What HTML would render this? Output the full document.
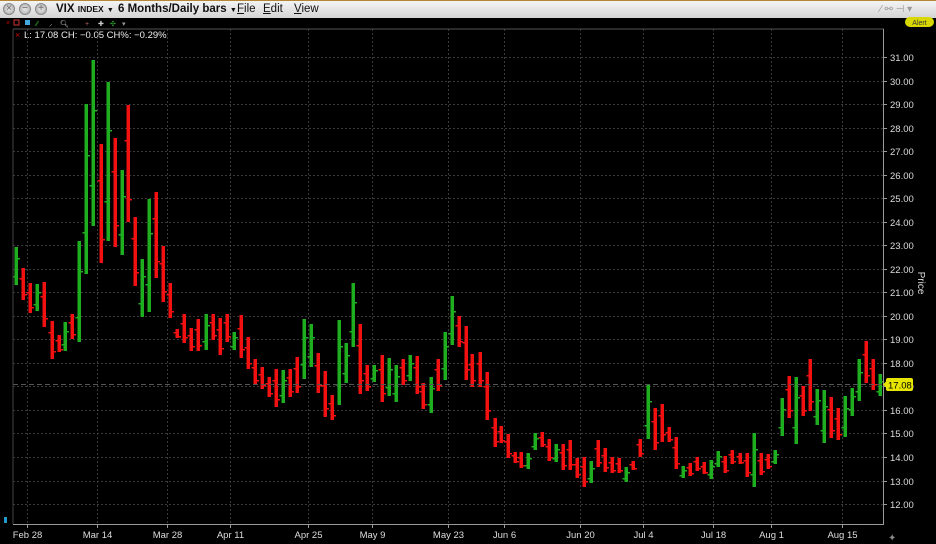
<!DOCTYPE html>
<html><head><meta charset="utf-8">
<style>
html,body{margin:0;padding:0;background:#000;width:936px;height:544px;overflow:hidden;font-family:"Liberation Sans","DejaVu Sans",sans-serif}
#top{position:absolute;left:0;top:0;width:936px;height:18px;background:linear-gradient(#f4f4f4,#d4d4d4);border-top:1px solid #b7853a;box-sizing:border-box}
.c{position:absolute;top:2px;width:12px;height:12px;border-radius:50%;background:radial-gradient(#e8e8e8,#a8a8a8);border:1px solid #888;box-sizing:border-box;font-size:10px;line-height:10px;text-align:center;color:#666}
.t{position:absolute;top:2px;font-size:11.5px;font-weight:bold;color:#111;font-family:"Liberation Sans",sans-serif;white-space:nowrap}
.m{position:absolute;top:2px;font-size:11.5px;color:#111;font-family:"Liberation Sans",sans-serif}
.m u{text-decoration:underline}
svg{position:absolute;left:0;top:0}
</style></head><body>
<div id="top">
<div class="c" style="left:3px">×</div><div class="c" style="left:19px">−</div><div class="c" style="left:35px">+</div>
<div class="t" style="left:56px">VIX <span style="font-size:8.5px">INDEX</span> <span style="font-size:7px">▼</span></div>
<div class="t" style="left:118px">6 Months/Daily bars <span style="font-size:7px">▼</span></div>
<div class="m" style="left:237px"><u>F</u>ile</div>
<div class="m" style="left:263px"><u>E</u>dit</div>
<div class="m" style="left:294px"><u>V</u>iew</div>
<div style="position:absolute;left:880px;top:3px;font-size:10px;color:#999">⁄ ⚯ ⊣ ▾</div>
</div>
<svg id="s" width="936" height="544" xmlns="http://www.w3.org/2000/svg">
<text x="15" y="38" font-size="9" fill="#c00">×</text>
<text x="24" y="38" font-size="9.5" fill="#eee" font-family="Liberation Sans,sans-serif">L: 17.08 CH: −0.05 CH%: −0.29%</text>
<g fill="#2a9" font-size="7"><text x="6" y="25" fill="#c00">×</text><rect x="14" y="20" width="5" height="5" fill="none" stroke="#c33"/><rect x="25" y="20" width="5" height="5" fill="#4ad"/><text x="36" y="26" fill="#3a3">⁄⁄</text><text x="49" y="26" fill="#ccc">⸝</text><text x="60" y="26" fill="#ccc">🔍︎</text><text x="85" y="26" fill="#b66">+</text><text x="98" y="26" fill="#ccc">✚</text><text x="110" y="26" fill="#3a3">✣</text><text x="122" y="26" fill="#999">▾</text></g>
<rect x="905" y="17" width="29" height="10" rx="5" fill="#d8d800"/>
<text x="919.5" y="25" font-size="7" text-anchor="middle" fill="#333">Alert</text>
<g id="grid"></g>
<g id="bars"></g>
<line x1="13" y1="384.5" x2="883" y2="384.5" stroke="#555" stroke-dasharray="5,3"/>
<line x1="13" y1="29" x2="884" y2="29" stroke="#555"/>
<line x1="13" y1="29" x2="13" y2="524" stroke="#444"/>
<line x1="883.5" y1="29" x2="883.5" y2="525" stroke="#999"/>
<line x1="13" y1="524.5" x2="884" y2="524.5" stroke="#999"/>
<rect x="886" y="378" width="27" height="13" rx="2" fill="#e6e600"/>
<path d="M883 384.5 l4 -4 v8z" fill="#e6e600"/>
<text x="888" y="388.5" font-size="9.5" fill="#000">17.08</text>
<text transform="translate(918,283) rotate(90)" font-size="10" fill="#ddd" text-anchor="middle">Price</text>
<rect x="4" y="517" width="3" height="6" fill="#29c"/>
<text x="888" y="541" font-size="10" fill="#888">✦</text>
</svg>
<script>
var g=document.getElementById('grid'),b=document.getElementById('bars'),h='';
function y(p){return 57+(31-p)*23.53}
for(var p=12;p<=31;p++){var yy=Math.round(y(p))+.5;h+='<line x1="13" y1="'+yy+'" x2="883" y2="'+yy+'" stroke="#3a3a3a" stroke-dasharray="2,2"/>';h+='<line x1="883" y1="'+yy+'" x2="887" y2="'+yy+'" stroke="#999"/>';h+='<text x="890" y="'+(yy+3.5)+'" font-size="9.5" fill="#ddd">'+p+'.00</text>';}
var d=[[27,'Feb 28'],[97,'Mar 14'],[167,'Mar 28'],[230,'Apr 11'],[308,'Apr 25'],[372,'May 9'],[448,'May 23'],[504,'Jun 6'],[580,'Jun 20'],[643,'Jul 4'],[713,'Jul 18'],[771,'Aug 1'],[842,'Aug 15']];
d.forEach(function(e){var x=e[0]+.5;h+='<line x1="'+x+'" y1="29" x2="'+x+'" y2="524" stroke="#3a3a3a" stroke-dasharray="2,2"/><line x1="'+x+'" y1="524" x2="'+x+'" y2="528" stroke="#999"/><text x="'+x+'" y="538" font-size="9.5" fill="#ddd" text-anchor="middle">'+e[1]+'</text>';});
g.innerHTML=h;
var B=[[16,'g',247,285],[23,'r',268,300],[30,'r',283,313],[37,'g',284,311],[44,'r',282,327],[52,'r',321,359],[59,'r',335,352],[65,'g',322,351],[72,'r',314,339],[79,'g',241,342],[86,'g',104,274],[93,'g',60,226],[101,'r',144,263],[108,'g',82,241],[115,'r',138,247],[122,'g',170,255],[128,'r',105,222],[135,'r',217,286],[142,'g',259,317],[149,'g',199,312],[156,'r',192,278],[163,'r',246,302],[170,'r',283,318],[177,'r',329,338],[184,'r',314,343],[191,'r',328,351],[198,'r',319,351],[206,'g',314,350],[213,'r',314,340],[220,'r',318,355],[227,'r',314,342],[234,'g',332,350],[241,'r',315,358],[248,'r',337,369],[255,'r',359,385],[262,'r',367,389],[269,'r',377,397],[276,'r',369,407],[283,'g',370,403],[290,'r',369,397],[297,'r',357,393],[304,'g',319,379],[311,'g',324,367],[318,'r',353,393],[325,'r',371,417],[332,'r',395,420],[339,'g',320,405],[346,'g',343,383],[353,'g',283,347],[360,'r',324,394],[367,'r',365,391],[374,'g',365,382],[382,'r',355,402],[389,'g',358,396],[396,'g',365,402],[403,'r',359,385],[410,'g',355,381],[417,'r',356,394],[423,'r',383,409],[431,'g',377,413],[438,'r',359,391],[445,'g',332,380],[452,'g',296,345],[459,'r',316,347],[466,'r',326,380],[472,'r',354,387],[480,'r',352,387],[487,'r',372,420],[495,'r',418,447],[501,'r',426,443],[508,'r',434,458],[515,'r',452,463],[521,'r',452,468],[528,'g',453,469],[535,'g',433,450],[542,'r',432,447],[549,'r',439,461],[556,'g',444,462],[563,'r',444,470],[570,'r',440,470],[577,'r',458,478],[584,'r',457,487],[591,'g',461,483],[598,'r',440,467],[605,'r',448,472],[612,'r',457,473],[619,'r',458,473],[626,'g',467,482],[633,'r',461,470],[640,'r',439,457],[648,'g',384,439],[655,'r',408,450],[662,'r',404,442],[669,'r',427,442],[676,'r',437,469],[683,'g',466,478],[690,'r',463,476],[697,'r',457,471],[704,'r',462,474],[711,'g',460,479],[718,'g',451,467],[725,'r',456,473],[732,'r',450,464],[740,'r',453,464],[747,'r',453,477],[754,'g',433,487],[761,'r',453,475],[768,'r',454,469],[775,'g',450,464],[782,'g',398,436],[789,'r',376,418],[796,'g',377,444],[803,'r',386,416],[810,'r',359,411],[817,'g',389,425],[824,'g',390,443],[831,'r',397,438],[838,'r',408,440],[845,'g',396,437],[852,'g',388,416],[859,'g',359,401],[866,'r',341,383],[873,'r',359,390],[880,'g',374,396]];
h='';
B.forEach(function(e){var c=e[1]=='g'?'#1fae1f':'#f21010',x=e[0]-1.5,t=e[2],l=e[3],r=l-t;
var o,cl;if(e[1]=='g'){o=t+r*0.75;cl=t+r*0.3}else{o=t+r*0.3;cl=t+r*0.8}
h+='<rect x="'+x+'" y="'+t+'" width="3.5" height="'+r+'" fill="'+c+'"/><rect x="'+(x-2)+'" y="'+Math.round(o)+'" width="2" height="1.5" fill="'+c+'"/><rect x="'+(x+3.5)+'" y="'+Math.round(cl)+'" width="2" height="1.5" fill="'+c+'"/>';});
b.innerHTML=h;
</script>
</body></html>
